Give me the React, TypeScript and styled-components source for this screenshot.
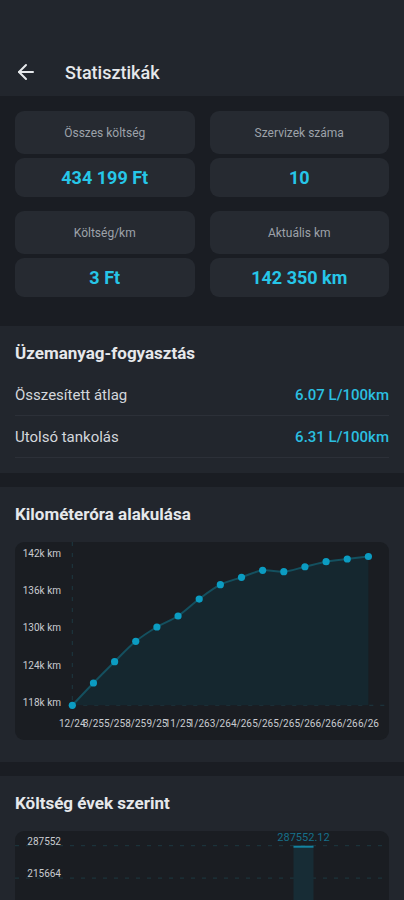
import React from 'react';
import styled, { createGlobalStyle } from 'styled-components';
import { ArrowLeft } from 'lucide-react';

const GlobalStyle = createGlobalStyle`
  body {
    margin: 0;
    background-color: #1a1d23;
    font-family: Roboto, "Noto Sans", sans-serif;
    color: #e6e8eb;
  }
`;

const Page = styled.div`
  width: 404px;
  min-height: 900px;
  background-color: #1a1d23;
`;

const Header = styled.header`
  background-color: #22262d;
  padding-top: 48px;
`;

const Toolbar = styled.div`
  display: flex;
  align-items: center;
  height: 48px;
  padding-left: 14px;
`;

const BackButton = styled.button`
  display: flex;
  align-items: center;
  justify-content: center;
  padding: 0;
  border: none;
  background: none;
  color: #e6e8eb;
  margin-right: 27px;
`;

const Title = styled.h1`
  margin: 0;
  font-size: 18px;
  font-weight: 500;
  color: #e6e8eb;
`;

const StatsGrid = styled.div`
  display: grid;
  grid-template-columns: 1fr 1fr;
  column-gap: 15px;
  row-gap: 14px;
  padding: 15px 15px 29px;
`;

const StatGroup = styled.div`
  display: flex;
  flex-direction: column;
  gap: 4px;
`;

const StatBox = styled.div<{ $tall?: boolean }>`
  display: flex;
  align-items: center;
  justify-content: center;
  height: ${({ $tall }) => ($tall ? '43px' : '39px')};
  border-radius: 9px;
  background-color: #262a31;
`;

const StatLabel = styled.span`
  font-size: 12px;
  color: #9da2aa;
`;

const StatValue = styled.span`
  font-size: 18px;
  font-weight: 700;
  color: #26c6e8;
`;

const Section = styled.section<{ $bottom?: number }>`
  background-color: #22262d;
  padding: 16px 15px ${({ $bottom }) => $bottom ?? 15}px;
  & + & {
    margin-top: 14px;
  }
`;

const SectionTitle = styled.h2`
  margin: 0;
  font-size: 17px;
  line-height: 22px;
  font-weight: 700;
  color: #e6e8eb;
`;

const FuelList = styled.div`
  margin-top: 10px;
`;

const FuelRow = styled.div`
  display: flex;
  align-items: center;
  justify-content: space-between;
  height: 41px;
  border-bottom: 1px solid #2c3038;
`;

const RowLabel = styled.span`
  font-size: 15px;
  color: #d4d7dc;
`;

const RowValue = styled.span`
  font-size: 15px;
  font-weight: 500;
  color: #2bbfe0;
`;

const ChartCard = styled.div`
  margin-top: 17px;
  border-radius: 9px;
  background-color: #1a1d22;
  overflow: hidden;
`;

const ChartSvg = styled.svg`
  display: block;
  font-family: Roboto, "Noto Sans", sans-serif;
`;

const GRID = '#1d3942';
const AXIS_TEXT = '#c9ccd1';

const kmData = [
  { label: '12/24', km: 118000 },
  { label: '3/25', km: 121600 },
  { label: '5/25', km: 125030 },
  { label: '8/25', km: 128320 },
  { label: '9/25', km: 130630 },
  { label: '11/25', km: 132400 },
  { label: '1/26', km: 135140 },
  { label: '3/26', km: 137450 },
  { label: '4/26', km: 138640 },
  { label: '5/26', km: 139770 },
  { label: '5/26', km: 139550 },
  { label: '5/26', km: 140350 },
  { label: '6/26', km: 141160 },
  { label: '6/26', km: 141600 },
  { label: '6/26', km: 142000 },
];

// catmull-rom -> bezier, close enough to a monotone curve
const smoothPath = (pts: [number, number][]) => {
  let d = `M${pts[0][0]},${pts[0][1]}`;
  for (let i = 0; i < pts.length - 1; i++) {
    const p0 = pts[i - 1] || pts[i];
    const p1 = pts[i];
    const p2 = pts[i + 1];
    const p3 = pts[i + 2] || p2;
    const c1x = p1[0] + (p2[0] - p0[0]) / 6;
    const c1y = p1[1] + (p2[1] - p0[1]) / 6;
    const c2x = p2[0] - (p3[0] - p1[0]) / 6;
    const c2y = p2[1] - (p3[1] - p1[1]) / 6;
    d += ` C${c1x},${c1y} ${c2x},${c2y} ${p2[0]},${p2[1]}`;
  }
  return d;
};

const OdometerChart: React.FC = () => {
  const width = 374;
  const height = 198;
  const left = 57.3;
  const base = 163.3;
  const step = 21.15;
  const yOf = (km: number) => base - ((km - 118000) / 24000) * 148.8;
  const pts: [number, number][] = kmData.map((d, i) => [left + i * step, yOf(d.km)]);
  const line = smoothPath(pts);
  const last = pts[pts.length - 1];
  const area = `${line} L${last[0]},${base} L${left},${base} Z`;
  const ticks = [118000, 124000, 130000, 136000, 142000];

  return (
    <ChartSvg width={width} height={height}>
      <line x1={left} y1={0} x2={left} y2={base} stroke={GRID} strokeDasharray="4 7" />
      <line x1={left} y1={base} x2={width - 2} y2={base} stroke={GRID} strokeDasharray="4 7" />
      <path d={area} fill="#15272f" />
      <path d={line} fill="none" stroke="#14505f" strokeWidth={2} />
      {pts.map(([x, y], i) => (
        <circle key={i} cx={x} cy={y} r={3.6} fill="#0b9cc2" />
      ))}
      {ticks.map((t) => (
        <text key={t} x={46} y={yOf(t) - 3} fontSize={10} fill={AXIS_TEXT} textAnchor="end" dominantBaseline="central">
          {`${t / 1000}k km`}
        </text>
      ))}
      {kmData.map((d, i) => (
        <text key={i} x={pts[i][0]} y={181.7} fontSize={10} fill={AXIS_TEXT} textAnchor="middle" dominantBaseline="central">
          {d.label}
        </text>
      ))}
    </ChartSvg>
  );
};

const yearData = [
  { year: '2024', cost: 32150 },
  { year: '2025', cost: 114497 },
  { year: '2026', cost: 287552.12 },
];

const CostChart: React.FC = () => {
  const width = 374;
  const height = 198;
  const top = 14.7;
  const base = top + 4 * 32.4;
  const max = 287552;
  const yOf = (v: number) => base - (v / max) * (base - top);
  const ticks = [0, 71888, 143776, 215664, 287552];
  const plotLeft = 48;
  const band = 96.2;

  return (
    <ChartSvg width={width} height={height}>
      {ticks.map((t) => (
        <g key={t}>
          <line x1={0} y1={yOf(t)} x2={width - 2} y2={yOf(t)} stroke={GRID} strokeDasharray="4 7" />
          <text x={46} y={yOf(t) - 4.5} fontSize={10} fill={AXIS_TEXT} textAnchor="end" dominantBaseline="central">
            {t}
          </text>
        </g>
      ))}
      {yearData.map((d, i) => {
        const cx = plotLeft + band * (i + 0.5);
        const y = yOf(d.cost);
        return (
          <g key={d.year}>
            <rect x={cx - 10} y={y} width={20} height={base - y} fill="#172c35" />
            <rect x={cx - 10} y={y} width={20} height={2} fill="#1482a0" />
            <text x={cx} y={y - 8} fontSize={11} fill="#16708a" textAnchor="middle" dominantBaseline="central">
              {d.cost.toFixed(2)}
            </text>
            <text x={cx} y={base + 16} fontSize={10} fill={AXIS_TEXT} textAnchor="middle" dominantBaseline="central">
              {d.year}
            </text>
          </g>
        );
      })}
    </ChartSvg>
  );
};

const stats = [
  { label: 'Összes költség', value: '434 199 Ft' },
  { label: 'Szervizek száma', value: '10' },
  { label: 'Költség/km', value: '3 Ft' },
  { label: 'Aktuális km', value: '142 350 km' },
];

const App: React.FC = () => {
  return (
    <Page>
      <GlobalStyle />
      <Header>
        <Toolbar>
          <BackButton aria-label="Vissza">
            <ArrowLeft size={24} strokeWidth={2} />
          </BackButton>
          <Title>Statisztikák</Title>
        </Toolbar>
      </Header>

      <StatsGrid>
        {stats.map((s) => (
          <StatGroup key={s.label}>
            <StatBox $tall>
              <StatLabel>{s.label}</StatLabel>
            </StatBox>
            <StatBox>
              <StatValue>{s.value}</StatValue>
            </StatBox>
          </StatGroup>
        ))}
      </StatsGrid>

      <Section>
        <SectionTitle>Üzemanyag-fogyasztás</SectionTitle>
        <FuelList>
          <FuelRow>
            <RowLabel>Összesített átlag</RowLabel>
            <RowValue>6.07 L/100km</RowValue>
          </FuelRow>
          <FuelRow>
            <RowLabel>Utolsó tankolás</RowLabel>
            <RowValue>6.31 L/100km</RowValue>
          </FuelRow>
        </FuelList>
      </Section>

      <Section $bottom={22}>
        <SectionTitle>Kilométeróra alakulása</SectionTitle>
        <ChartCard>
          <OdometerChart />
        </ChartCard>
      </Section>

      <Section $bottom={22}>
        <SectionTitle>Költség évek szerint</SectionTitle>
        <ChartCard>
          <CostChart />
        </ChartCard>
      </Section>
    </Page>
  );
};

export default App;
